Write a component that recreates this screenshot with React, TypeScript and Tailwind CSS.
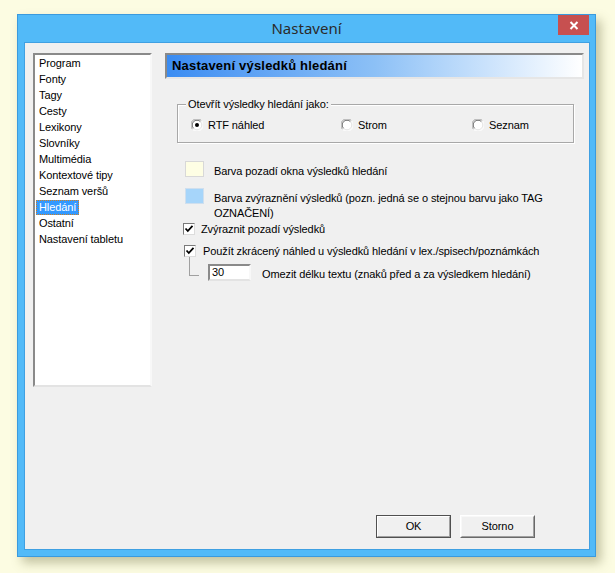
import React from "react";

const items = [
  "Program",
  "Fonty",
  "Tagy",
  "Cesty",
  "Lexikony",
  "Slovníky",
  "Multimédia",
  "Kontextové tipy",
  "Seznam veršů",
  "Hledání",
  "Ostatní",
  "Nastavení tabletu",
];

function Radio({ checked }: { checked?: boolean }) {
  return (
    <svg width="12" height="12" viewBox="0 0 12 12" className="shrink-0">
      <circle cx="6" cy="6" r="5.5" fill="#ffffff" />
      <path d="M1.6 10.4 A6 6 0 0 1 10.4 1.6" stroke="#a0a0a0" strokeWidth="1" fill="none" />
      <path d="M2.6 9.4 A4.8 4.8 0 0 1 9.4 2.6" stroke="#696969" strokeWidth="1" fill="none" />
      <path d="M10.4 1.6 A6 6 0 0 1 1.6 10.4" stroke="#ffffff" strokeWidth="1" fill="none" />
      <path d="M9.4 2.6 A4.8 4.8 0 0 1 2.6 9.4" stroke="#e3e3e3" strokeWidth="1" fill="none" />
      {checked && <circle cx="6" cy="6" r="2" fill="#000000" />}
    </svg>
  );
}

function Check() {
  return (
    <div className="w-[12px] h-[12px] shrink-0 border border-t-[#7a7a7a] border-l-[#7a7a7a] border-b-[#dcdcdc] border-r-[#dcdcdc] bg-white flex items-center justify-center">
      <svg width="10" height="10" viewBox="0 0 10 10">
        <path d="M1.5 4.5 L3.8 7 L8.5 1.8" stroke="#000" strokeWidth="1.8" fill="none" />
      </svg>
    </div>
  );
}

export default function App() {
  return (
    <div
      className="w-[615px] h-[573px] bg-[#fcfce2] pt-[14px] pl-[17px] text-[11px] text-black tracking-[-0.1px]"
      style={{ fontFamily: '"Liberation Sans", Arial, sans-serif' }}
    >
      <div className="relative w-[579px] h-[543px] border border-[#3a9ade] bg-[#52baf8] flex flex-col shadow-[5px_6px_10px_rgba(90,90,40,0.35)]">
        {/* title bar */}
        <div className="h-[28px] flex items-center justify-center">
          <span
            className="text-[15px] text-[#2b2b2b] -mt-[1px] tracking-normal"
            style={{ fontFamily: '"Noto Sans", "Open Sans", sans-serif' }}
          >
            Nastavení
          </span>
        </div>
        <div className="absolute top-0 right-[6px] w-[31px] h-[20px] bg-[#c75050] flex items-center justify-center">
          <svg width="10" height="9" viewBox="0 0 10 9">
            <path d="M1.5 1 L8.5 8 M8.5 1 L1.5 8" stroke="#ffffff" strokeWidth="2" />
          </svg>
        </div>

        {/* client */}
        <div className="ml-[7px] w-[564px] h-[506px] bg-[#f0f0f0] shadow-[0_0_0_1px_#3fa0e2] flex pl-[8px] pt-[10px]">
          {/* list box */}
          <div className="w-[119px] h-[334px] shrink-0 border-2 border-t-[#8a8a8a] border-l-[#8a8a8a] border-b-[#e3e3e3] border-r-[#f8f8f8] bg-white pl-[1px]">
            {items.map((it) => (
              <div key={it} className="h-[16px] flex items-center">
                {it === "Hledání" ? (
                  <span className="bg-[#3399ff] text-white px-[2px] h-[15px] leading-[13px] border border-dotted border-[#d08020]">
                    {it}
                  </span>
                ) : (
                  <span className="px-[3px]">{it}</span>
                )}
              </div>
            ))}
          </div>

          {/* right column */}
          <div className="ml-[13px] w-[419px] h-[496px] flex flex-col">
            {/* header */}
            <div className="h-[26px] border-2 border-t-[#8a8a8a] border-l-[#8a8a8a] border-b-[#e6e6e6] border-r-[#e6e6e6] bg-gradient-to-r from-[#3a8cf2] via-[#8cc0f6] to-[#ffffff] flex items-center pl-[5px]">
              <span className="text-[13px] font-bold tracking-[0.2px]">Nastavení výsledků hledání</span>
            </div>

            {/* group box */}
            <div className="relative mt-[25px] ml-[12px] w-[397px] h-[39px] border border-[#a8a8a8] shadow-[inset_1px_1px_0_#ffffff,1px_1px_0_#ffffff]">
              <span className="absolute -top-[8px] left-[8px] px-[2px] bg-[#f0f0f0] leading-[14px]">
                Otevřít výsledky hledání jako:
              </span>
              <div className="flex items-center pl-[13px] pt-[12px]">
                <div className="w-[150px] flex items-center gap-[5px]">
                  <Radio checked />
                  <span>RTF náhled</span>
                </div>
                <div className="w-[131px] flex items-center gap-[5px]">
                  <Radio />
                  <span>Strom</span>
                </div>
                <div className="flex items-center gap-[5px]">
                  <Radio />
                  <span>Seznam</span>
                </div>
              </div>
            </div>

            {/* swatch 1 */}
            <div className="flex items-start mt-[18px] ml-[20px]">
              <div className="w-[19px] h-[16px] bg-[#fefee4] border border-[#d8d8d8]" />
              <span className="ml-[10px] mt-[4px] leading-[13px]">Barva pozadí okna výsledků hledání</span>
            </div>

            {/* swatch 2 */}
            <div className="flex items-start mt-[10px] ml-[20px]">
              <div className="w-[19px] h-[16px] shrink-0 bg-[#a6d5fa] border border-[#cfdfee]" />
              <span className="ml-[10px] mt-[3px] leading-[15px] w-[340px]">
                Barva zvýraznění výsledků (pozn. jedná se o stejnou barvu jako TAG OZNAČENÍ)
              </span>
            </div>

            {/* checkbox 1 */}
            <div className="flex items-center mt-0 ml-[18px] gap-[6px]">
              <Check />
              <span>Zvýraznit pozadí výsledků</span>
            </div>

            {/* checkbox 2 */}
            <div className="flex items-center mt-[5px] ml-[19px] gap-[7px]">
              <Check />
              <span>Použít zkrácený náhled u výsledků hledání v lex./spisech/poznámkách</span>
            </div>

            {/* input row */}
            <div className="flex items-start ml-[24px] -mt-[2px]">
              <div className="w-[10px] h-[19px] border-l border-b border-[#a0a0a0] shrink-0" />
              <div className="ml-[9px] mt-[7px] w-[43px] h-[17px] border-2 border-t-[#8a8a8a] border-l-[#8a8a8a] border-b-[#e3e3e3] border-r-[#f8f8f8] bg-white flex items-center pl-[2px]">
                30
              </div>
              <span className="ml-[11px] mt-[9px]">Omezit délku textu (znaků před a za výsledkem hledání)</span>
            </div>

            {/* buttons */}
            <div className="mt-auto mb-[11px] flex gap-[9px] pl-[211px]">
              <div className="w-[75px] h-[23px] border border-[#505050] bg-[#f0f0f0]">
                <div className="w-full h-full border border-t-white border-l-white border-b-[#a0a0a0] border-r-[#a0a0a0] flex items-center justify-center">
                  OK
                </div>
              </div>
              <div className="w-[75px] h-[23px] border border-t-white border-l-white border-b-[#696969] border-r-[#696969] bg-[#f0f0f0]">
                <div className="w-full h-full border border-t-[#f8f8f8] border-l-[#f8f8f8] border-b-[#a0a0a0] border-r-[#a0a0a0] flex items-center justify-center">
                  Storno
                </div>
              </div>
            </div>
          </div>
        </div>
      </div>
    </div>
  );
}
